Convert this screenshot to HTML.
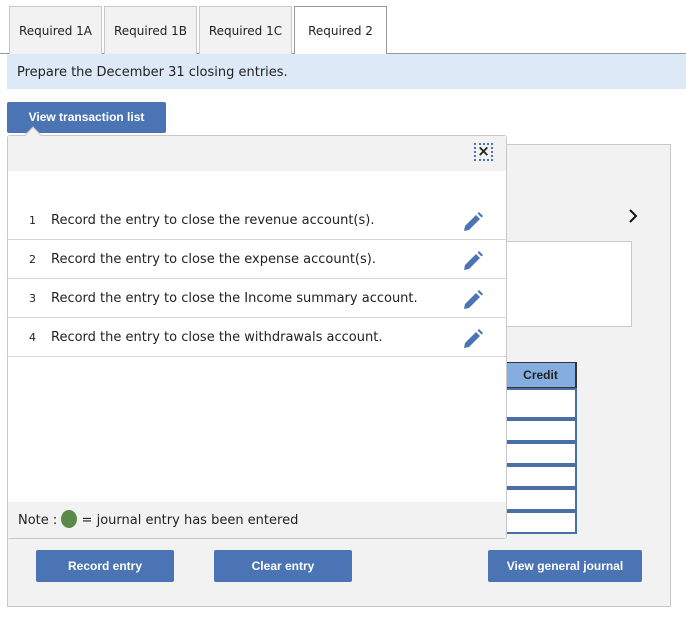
<!DOCTYPE html>
<html><head><style>
*{margin:0;padding:0;box-sizing:border-box}
body{width:686px;height:620px;background:#fff;font-family:"DejaVu Sans","Liberation Sans",sans-serif;position:relative;overflow:hidden;color:#222}
.a{position:absolute}
.tab{position:absolute;top:6px;height:48px;width:93px;background:#f2f2f2;border:1px solid #c8c8c8;border-bottom:none;font-size:12px;text-align:center;line-height:48px}
.btn{position:absolute;background:#4a74b4;color:#fff;font-family:"Liberation Sans",sans-serif;font-weight:bold;font-size:12px;text-align:center;border-radius:2px}
.row{position:absolute;left:7px;width:499px;height:39px;border-bottom:1px solid #d6d6d6;font-size:13px;line-height:39px}
.row .n{position:absolute;left:22px;font-size:11px}
.row .t{position:absolute;left:44px}
.row svg{position:absolute;left:456px;top:11px}
.cell{position:absolute;left:506px;width:71px;background:#fff;border:2px solid #4a6fa5;border-left:none}
</style></head><body>
<div class="a" style="left:0;top:53px;width:686px;height:1px;background:#999"></div>
<div class="tab" style="left:9px">Required 1A</div>
<div class="tab" style="left:104px">Required 1B</div>
<div class="tab" style="left:199px">Required 1C</div>
<div class="tab" style="left:294px;background:#fff;border-color:#999;height:48px;z-index:2">Required 2</div>
<div class="a" style="left:7px;top:54px;width:679px;height:35px;background:#dde9f6;font-size:13px;line-height:37px;padding-left:10px">Prepare the December 31 closing entries.</div>
<div class="btn" style="left:7px;top:102px;width:159px;height:31px;line-height:31px">View transaction list</div>

<div class="a" style="left:7px;top:144px;width:664px;height:463px;background:#f2f2f2;border:1px solid #c8c8c8"></div>
<div class="a" style="left:627px;top:208px"><svg width="12" height="16"><path d="M3 2 L9 8 L3 14" stroke="#111" stroke-width="2" fill="none"/></svg></div>
<div class="a" style="left:506px;top:241px;width:126px;height:86px;background:#fff;border:1px solid #c8c8c8;border-left:none"></div>
<div class="cell" style="top:362px;height:26px;background:#84aee0;border-color:#333;border-width:1px 2px 1px 0;font-family:'Liberation Sans',sans-serif;font-weight:bold;font-size:12px;text-align:center;line-height:25px">Credit</div>
<div class="cell" style="top:388px;height:31px"></div>
<div class="cell" style="top:419px;height:23px"></div>
<div class="cell" style="top:442px;height:23px"></div>
<div class="cell" style="top:465px;height:23px"></div>
<div class="cell" style="top:488px;height:23px"></div>
<div class="cell" style="top:511px;height:23px"></div>

<div class="a" style="left:7px;top:135px;width:500px;height:404px;background:#fff;border:1px solid #c8c8c8;border-radius:3px"></div>
<div class="a" style="left:8px;top:136px;width:498px;height:35px;background:#f2f2f2"></div>
<div class="a" style="left:27px;top:129px;width:12px;height:12px;background:#f2f2f2;border-left:1px solid #c8c8c8;border-top:1px solid #c8c8c8;transform:rotate(45deg)"></div>
<div class="a" style="left:474px;top:143px;width:19px;height:18px;border:2px dotted #4a74b4;font-size:15px;line-height:13px;text-align:center;font-weight:bold">×</div>

<div class="row" style="top:201px"><span class="n">1</span><span class="t">Record the entry to close the revenue account(s).</span><svg width="20" height="20"><path d="M1 19 L2 14 L13 3 L17 7 L6 18 Z M14.5 1.5 L16 0 L20 4 L18.5 5.5 Z" fill="#4a74b4"/></svg></div>
<div class="row" style="top:240px"><span class="n">2</span><span class="t">Record the entry to close the expense account(s).</span><svg width="20" height="20"><path d="M1 19 L2 14 L13 3 L17 7 L6 18 Z M14.5 1.5 L16 0 L20 4 L18.5 5.5 Z" fill="#4a74b4"/></svg></div>
<div class="row" style="top:279px"><span class="n">3</span><span class="t">Record the entry to close the Income summary account.</span><svg width="20" height="20"><path d="M1 19 L2 14 L13 3 L17 7 L6 18 Z M14.5 1.5 L16 0 L20 4 L18.5 5.5 Z" fill="#4a74b4"/></svg></div>
<div class="row" style="top:318px"><span class="n">4</span><span class="t">Record the entry to close the withdrawals account.</span><svg width="20" height="20"><path d="M1 19 L2 14 L13 3 L17 7 L6 18 Z M14.5 1.5 L16 0 L20 4 L18.5 5.5 Z" fill="#4a74b4"/></svg></div>

<div class="a" style="left:8px;top:502px;width:498px;height:36px;background:#f2f2f2;font-size:13px;line-height:38px;padding-left:10px">Note : <span style="display:inline-block;width:16px;height:18px;border-radius:50%;background:#5a8a4a;vertical-align:-4px"></span> = journal entry has been entered</div>

<div class="btn" style="left:36px;top:550px;width:138px;height:32px;line-height:32px">Record entry</div>
<div class="btn" style="left:214px;top:550px;width:138px;height:32px;line-height:32px">Clear entry</div>
<div class="btn" style="left:488px;top:550px;width:154px;height:32px;line-height:32px">View general journal</div>
</body></html>
